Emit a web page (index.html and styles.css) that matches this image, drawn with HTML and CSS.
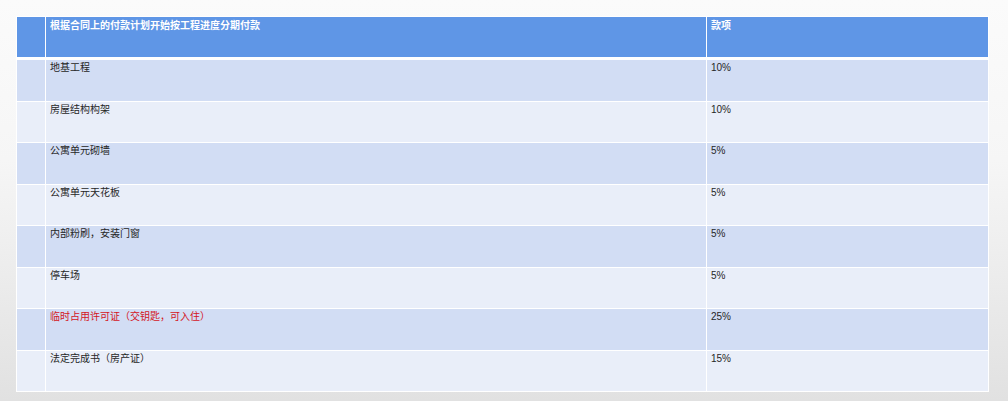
FILE: index.html
```html
<!DOCTYPE html>
<html lang="zh">
<head>
<meta charset="utf-8">
<link rel="stylesheet" href="styles.css">
</head>
<body>
<div class="slide">
  <div class="table">
    <div class="cell head"></div>
    <div class="cell head">根据合同上的付款计划开始按工程进度分期付款</div>
    <div class="cell head">款项</div>

    <div class="cell odd"></div>
    <div class="cell odd">地基工程</div>
    <div class="cell odd">10%</div>

    <div class="cell even"></div>
    <div class="cell even">房屋结构构架</div>
    <div class="cell even">10%</div>

    <div class="cell odd"></div>
    <div class="cell odd">公寓单元砌墙</div>
    <div class="cell odd">5%</div>

    <div class="cell even"></div>
    <div class="cell even">公寓单元天花板</div>
    <div class="cell even">5%</div>

    <div class="cell odd"></div>
    <div class="cell odd">内部粉刷，安装门窗</div>
    <div class="cell odd">5%</div>

    <div class="cell even"></div>
    <div class="cell even">停车场</div>
    <div class="cell even">5%</div>

    <div class="cell odd"></div>
    <div class="cell odd red">临时占用许可证（交钥匙，可入住）</div>
    <div class="cell odd">25%</div>

    <div class="cell even"></div>
    <div class="cell even">法定完成书（房产证）</div>
    <div class="cell even">15%</div>
  </div>
</div>
</body>
</html>
```

FILE: styles.css
```css
html, body {
  margin: 0;
  padding: 0;
}
body {
  width: 1008px;
  height: 401px;
  overflow: hidden;
  background: linear-gradient(to bottom, #fbfbfb 0%, #f6f6f6 40%, #e1e1e1 100%);
  font-family: "Liberation Sans", "Noto Sans CJK SC", sans-serif;
}
.slide {
  padding: 16px 0 0 16px;
}
.table {
  width: 973px;
  box-sizing: border-box;
  background: #ffffff;
  padding: 1px;
  display: grid;
  grid-template-columns: 28px 660px 1fr;
  grid-template-rows: 42px repeat(8, 40.5px);
  column-gap: 1px;
  row-gap: 1px;
}
.cell {
  font-size: 10px;
  line-height: 12px;
  padding: 2px 4px;
  color: #262626;
  box-sizing: border-box;
}
.head {
  background: #5f96e6;
  color: #ffffff;
  font-weight: bold;
  padding-top: 3px;
  margin-bottom: 2px;
}
.odd {
  background: #d2ddf4;
}
.even {
  background: #e9eef9;
}
.red {
  color: #d4151d;
}
```
